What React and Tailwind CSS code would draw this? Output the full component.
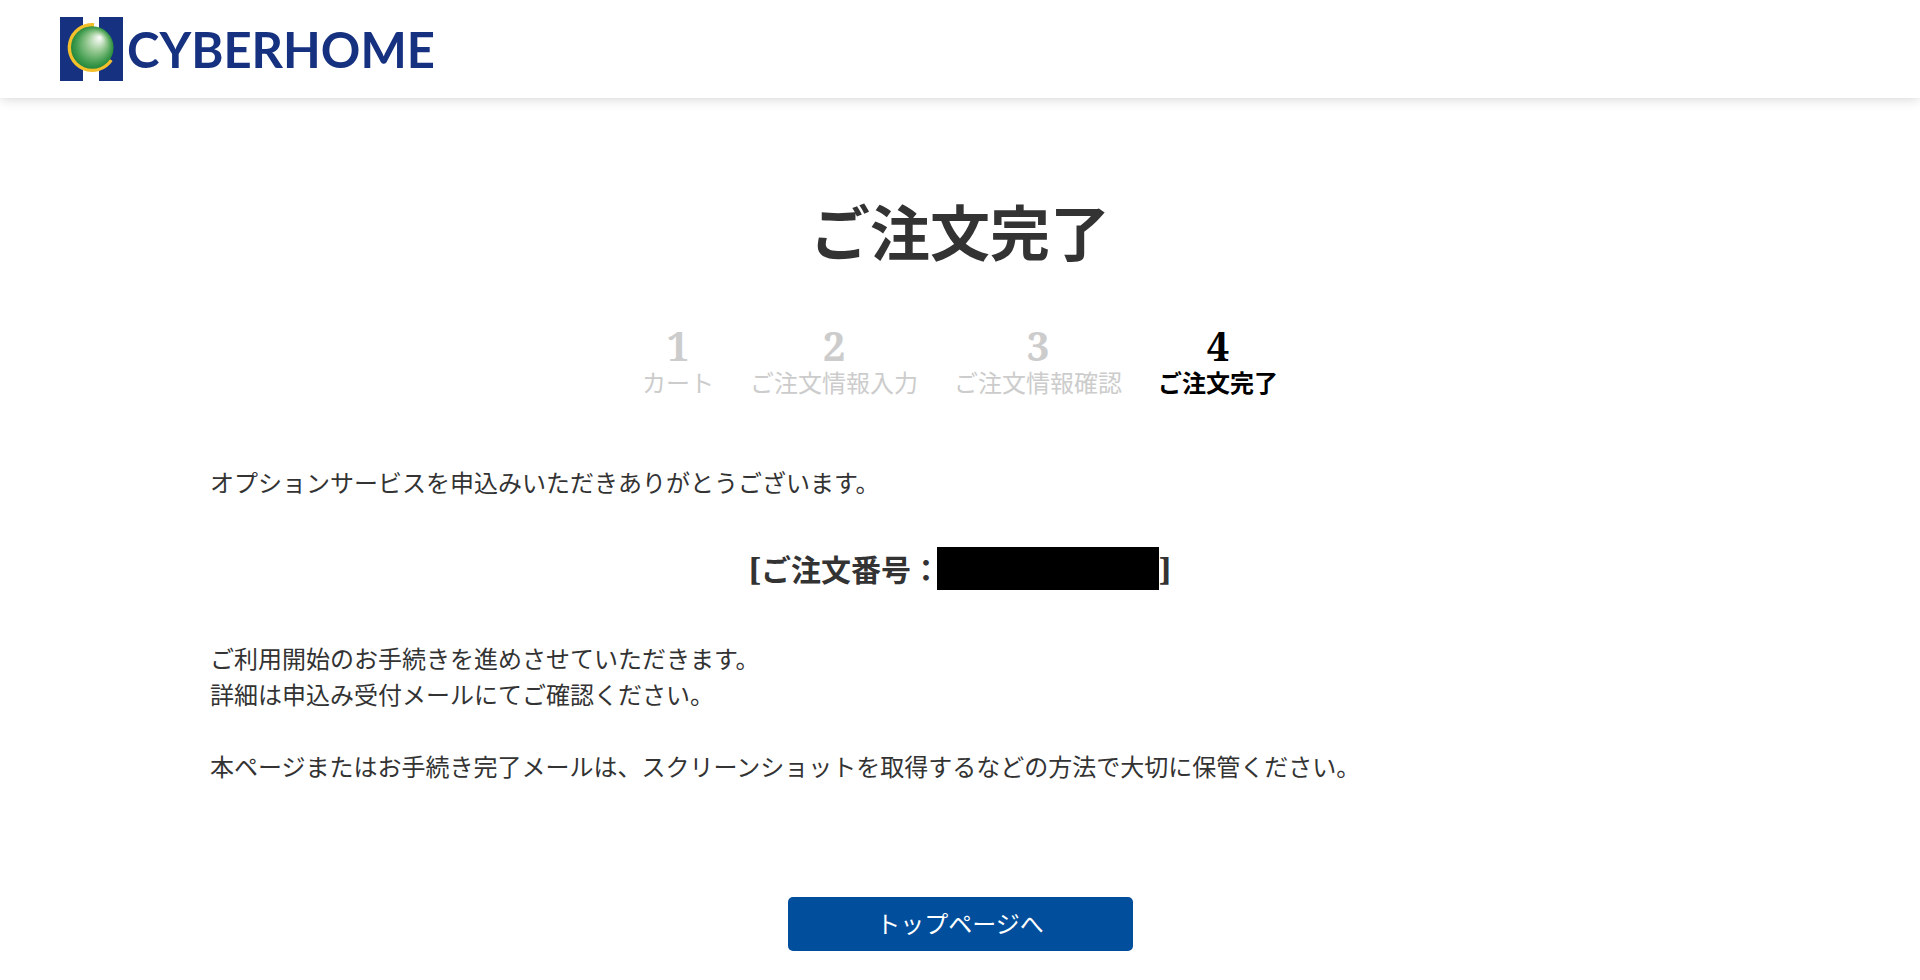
const steps = [
  { number: 1, label: 'カート' },
  { number: 2, label: 'ご注文情報入力' },
  { number: 3, label: 'ご注文情報確認' },
  { number: 4, label: 'ご注文完了', current: true },
];

function LogoMark() {
  return (
    <svg className="h-16 w-[63px] shrink-0" viewBox="0 0 63 64" aria-hidden="true">
      <defs>
        <radialGradient id="globe" cx="0.5" cy="0.5" r="0.52" fx="0.68" fy="0.26">
          <stop offset="0" stopColor="#ffffff" />
          <stop offset="0.12" stopColor="#e4f1e1" />
          <stop offset="0.45" stopColor="#93c78f" />
          <stop offset="0.78" stopColor="#469f52" />
          <stop offset="1" stopColor="#1f8439" />
        </radialGradient>
      </defs>
      <rect width="23" height="64" fill="#16317f" />
      <rect x="39" width="24" height="64" fill="#16317f" />
      <path d="M34 8.3A22.3 22.3 0 1 0 50.8 42.8" fill="none" stroke="#f3c02c" strokeWidth="4.4" />
      <circle cx="32.3" cy="30.5" r="21.3" fill="url(#globe)" />
    </svg>
  );
}

function Header() {
  return (
    <header className="flex h-[98px] items-center bg-white px-[60px] shadow-[0_0_12px_rgba(0,0,0,0.2)]">
      <a href="#" className="flex items-center gap-1 overflow-hidden">
        <LogoMark />
        <span className="font-[Lato,sans-serif] text-[49px] leading-[60px] font-bold text-[#16317f]">CYBERHOME</span>
      </a>
    </header>
  );
}

function Steps() {
  return (
    <ol className="mt-[49px] flex justify-center gap-9 text-center">
      {steps.map((step) => (
        <li
          key={step.number}
          aria-current={step.current ? 'step' : undefined}
          className={step.current ? 'font-bold text-black' : 'text-[#cccccc]'}
        >
          <span className="block text-[40px] leading-[38px] font-bold">{step.number}</span>
          <span className="block text-2xl leading-9">{step.label}</span>
        </li>
      ))}
    </ol>
  );
}

export default function App() {
  return (
    <div lang="ja" className="bg-white font-['Noto_Serif','Droid_Serif','Noto_Sans_CJK_JP',serif] text-2xl leading-9 text-[#333333]">
      <Header />
      <main className="mx-auto max-w-[1500px] pt-[90px] pb-6">
        <h1 className="text-center text-[60px] leading-[90px] font-bold">ご注文完了</h1>
        <Steps />
        <p className="mt-16">オプションサービスを申込みいただきありがとうございます。</p>
        <p className="mt-[46px] mb-12 flex items-start justify-center text-[30px] leading-[46px] font-bold">
          <span>[ご注文番号：</span>
          <span className="-ml-1 h-[43px] w-[222px] bg-black" />
          <span>]</span>
        </p>
        <p>
          ご利用開始のお手続きを進めさせていただきます。
          <br />
          詳細は申込み受付メールにてご確認ください。
        </p>
        <p className="mt-9">
          本ページまたはお手続き完了メールは、スクリーンショットを取得するなどの方法で大切に保管ください。
        </p>
        <div className="mt-28 flex justify-center">
          <a href="#" className="flex h-[54px] w-[345px] items-center justify-center rounded-[5px] bg-[#004e9c] text-white">
            トップページへ
          </a>
        </div>
      </main>
    </div>
  );
}
